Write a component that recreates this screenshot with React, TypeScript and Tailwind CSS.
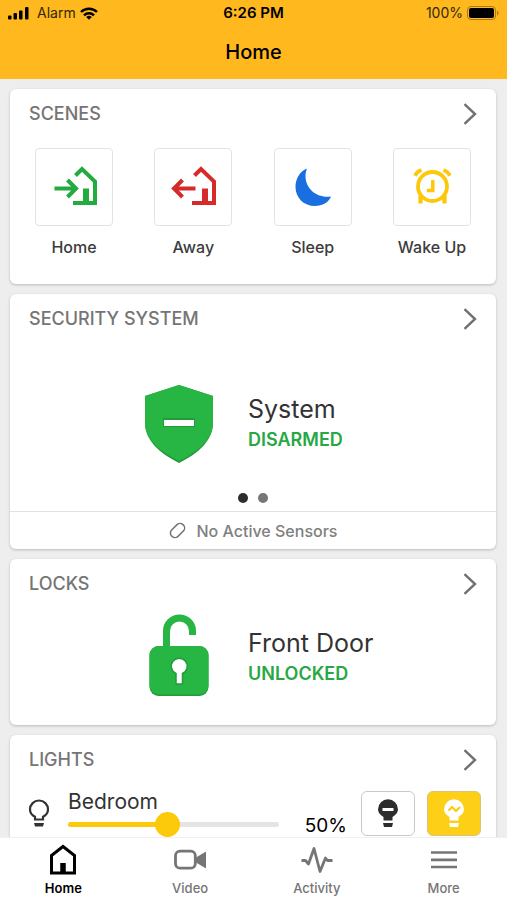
import React, { useState } from 'react';

type Tab = 'Home' | 'Video' | 'Activity' | 'More';

interface CardProps {
  title: string;
  children: React.ReactNode;
}

function Card({ title, children }: CardProps) {
  return (
    <section className="shrink-0 bg-white rounded-md shadow-[0_1px_3px_rgba(0,0,0,0.22)]">
      <div className="flex items-center justify-between h-[50px] px-[19px]">
        <h2 className="text-lg leading-6 font-medium text-[#757575]">{title}</h2>
        <button type="button" aria-label={`Open ${title.toLowerCase()}`}>
          <svg className="w-[14px] h-[22px]" viewBox="0 0 14 22" fill="none" stroke="#707070" strokeWidth="2.4">
            <path d="M1.5 1.2 L12 11 L1.5 20.8" />
          </svg>
        </button>
      </div>
      {children}
    </section>
  );
}

function HomeArriveIcon() {
  return (
    <svg className="w-[46px] h-[42px]" viewBox="0 0 46 42" fill="none" stroke="#22ab3f" strokeWidth="4">
      <path d="M3.5 22.5H25M16.500 14l8.500 8.500-8.500 8.500" />
      <path d="M24.500 9.500 31 3 44 15.500V37H22" />
      <path d="M35 22.500V37" strokeWidth="6" />
    </svg>
  );
}

function HomeLeaveIcon() {
  return (
    <svg className="w-[46px] h-[42px]" viewBox="0 0 46 42" fill="none" stroke="#d62b2b" strokeWidth="4">
      <path d="M25.500 22.500H4.500M12.500 14 4 22.500l8.500 8.500" />
      <path d="M24.500 9.500 31 3 44 15.500V37H22" />
      <path d="M35 22.500V37" strokeWidth="6" />
    </svg>
  );
}

function MoonIcon() {
  return (
    <svg className="w-[38px] h-[40px]" viewBox="0 0 38 40" fill="#1a6fe0">
      <path d="M13 1.500C5.500 4.500 1.500 12 1.500 20c0 11 8.500 19 19.500 19 7.500 0 13.500-3.500 16-9.500C23 31.500 11.500 22 11.500 9c0-2.700.5-5 1.500-7.500Z" />
    </svg>
  );
}

function AlarmClockIcon() {
  return (
    <svg className="w-[38px] h-[38px]" viewBox="0 0 38 38" fill="none" stroke="#fdc70a" strokeWidth="3.800">
      <circle cx="19.500" cy="18.500" r="14.500" />
      <path d="M19.800 12v10.500h-6" strokeWidth="3.500" />
      <path d="M7.500 27v8.500M31.500 27v8.500" strokeWidth="4.200" />
      <path d="M2 7.800C3.200 5 5.200 3 8.500 2M37 7.800C35.800 5 33.800 3 30.500 2" />
    </svg>
  );
}

const scenes = [
  { name: 'Home', icon: <HomeArriveIcon /> },
  { name: 'Away', icon: <HomeLeaveIcon /> },
  { name: 'Sleep', icon: <MoonIcon /> },
  { name: 'Wake Up', icon: <AlarmClockIcon /> },
];

function StatusBar() {
  return (
    <div className="grid grid-cols-3 items-center h-[26px] px-2 text-[14px] leading-5">
      <div className="flex items-center gap-2">
        <svg className="w-[21px] h-[13px]" viewBox="0 0 21 13" fill="currentColor">
          <rect x="0" y="8.500" width="3.500" height="4" rx="1" />
          <rect x="5.500" y="6" width="3.500" height="6.500" rx="1" />
          <rect x="11" y="3.500" width="3.500" height="9" rx="1" />
          <rect x="17" y="0" width="3.500" height="12.500" rx="1" />
        </svg>
        <span className="text-[#33270a]">Alarm</span>
        <svg className="w-[18px] h-[13px] -ml-1" viewBox="0 0 18 13" fill="none" stroke="currentColor" strokeWidth="2.400">
          <path d="M1 5a11.500 11.500 0 0 1 16 0" />
          <path d="M4 8.300a7.200 7.200 0 0 1 10 0" />
          <path d="M9 12.800 6.200 10a4 4 0 0 1 5.600 0Z" fill="currentColor" stroke="none" />
        </svg>
      </div>
      <span className="text-center text-[15px] font-semibold">6:26 PM</span>
      <div className="flex items-center justify-end gap-1">
        <span className="text-[#33270a]">100%</span>
        <svg className="w-[32px] h-[14px]" viewBox="0 0 32 14">
          <rect x="0.500" y="0.500" width="28" height="13" rx="3.500" fill="none" stroke="#a87a18" />
          <rect x="2" y="2" width="25" height="10" rx="2" fill="#000" />
          <path d="M30 4.500c2 .8 2 4.200 0 5Z" fill="#a87a18" />
        </svg>
      </div>
    </div>
  );
}

function ShieldIcon() {
  return (
    <svg className="w-[70px] h-[80px]" viewBox="0 0 70 80">
      <path d="M35 1 69 12v27c0 17-14 30-34 40C15 69 1 56 1 39V12Z" fill="#219a39" />
      <path d="M35 1 69 12v26c0 17-14 29-34 39C15 67 1 55 1 38V12Z" fill="#27b544" />
      <rect x="19" y="34" width="32" height="9" fill="#1f9d3a" />
      <rect x="20" y="36" width="30" height="6" fill="#fff" />
    </svg>
  );
}

function UnlockedIcon() {
  return (
    <svg className="w-[60px] h-[84px] mb-[6px]" viewBox="0 0 60 84">
      <path d="M17.500 36V18a13 13 0 0 1 26 0v4" fill="none" stroke="#27b544" strokeWidth="7" />
      <rect x="0.500" y="33" width="59" height="50" rx="9" fill="#219a39" />
      <rect x="0.500" y="33" width="59" height="48.500" rx="9" fill="#27b544" />
      <g fill="#fff" stroke="#1f9d3a" strokeWidth="1.500">
        <path d="M27 60.500a8 8 0 1 1 6.500 0V71H27Z" />
      </g>
    </svg>
  );
}

interface DeviceStatusProps {
  icon: React.ReactNode;
  name: string;
  state: string;
}

function DeviceStatus({ icon, name, state }: DeviceStatusProps) {
  return (
    <div className="flex items-center gap-[34px] pl-[134px]">
      <div className="flex justify-center w-[70px]">{icon}</div>
      <div>
        <p className="text-[25px] leading-8 text-[#333]">{name}</p>
        <p className="text-lg leading-[30px] font-semibold text-[#27a844]">{state}</p>
      </div>
    </div>
  );
}

function LightsRow() {
  const [level, setLevel] = useState(47);
  // the label snaps to steps of ten
  const label = Math.round(level / 10) * 10;

  return (
    <div className="flex items-start pl-[18px] pr-[15px] pt-[6px] pb-4">
      <svg className="w-[22px] h-[28px] mt-2 shrink-0" viewBox="0 0 22 28" fill="none" stroke="#333" strokeWidth="2.200">
        <path d="M7 20.500v-2.700C3.800 16.200 2 13.800 2 10.500a9 9 0 0 1 18 0c0 3.300-1.800 5.700-5 7.300v2.700Z" />
        <path d="M6 24h10l-1 3.500H7Z" fill="#333" stroke="none" />
      </svg>
      <div className="flex flex-col flex-1 ml-[18px]">
        <label htmlFor="bedroom-level" className="text-[21px] leading-[22px] text-[#333]">Bedroom</label>
        <input
          id="bedroom-level"
          type="range"
          min={0}
          max={100}
          value={level}
          onChange={(e) => setLevel(Number(e.target.value))}
          className="block w-full h-[5px] mt-[9px] rounded-full appearance-none outline-none [&::-webkit-slider-thumb]:appearance-none [&::-webkit-slider-thumb]:w-[25px] [&::-webkit-slider-thumb]:h-[25px] [&::-webkit-slider-thumb]:rounded-full [&::-webkit-slider-thumb]:bg-[#fdc90b]"
          style={{ background: `linear-gradient(to right, #fdc90b ${level}%, #e4e4e4 ${level}%)` }}
        />
      </div>
      <output htmlFor="bedroom-level" className="w-[68px] mt-[23px] text-right text-[19px] leading-6 text-black">{label}%</output>
      <button type="button" aria-label="Turn bedroom off" className="flex justify-center items-center w-[54px] h-[45px] ml-[14px] rounded-md border border-[#c9c9c9] bg-white">
        <svg className="w-[22px] h-[30px]" viewBox="0 0 22 30">
          <path d="M6.500 21.500v-3.500C3 16 1 13.500 1 10.300a10 10 0 0 1 20 0c0 3.200-2 5.700-5.500 7.700v3.500Z" fill="#2d2d2d" />
          <path d="M6 24h10l-1 4H7Z" fill="#2d2d2d" />
          <rect x="5.500" y="9" width="11" height="3" fill="#fff" />
        </svg>
      </button>
      <button type="button" aria-label="Turn bedroom on" className="flex justify-center items-center w-[54px] h-[45px] ml-3 rounded-md border border-[#d9c47a] bg-[#fdcf16]">
        <svg className="w-[22px] h-[30px]" viewBox="0 0 22 30">
          <path d="M6.500 21.500v-3.500C3 16 1 13.500 1 10.300a10 10 0 0 1 20 0c0 3.200-2 5.700-5.500 7.700v3.500Z" fill="#fff" />
          <path d="M6 24h10l-1 4H7Z" fill="#fff" />
          <path d="M5.500 11.500 9 8l4 4 4-4" fill="none" stroke="#fdc90b" strokeWidth="2" />
        </svg>
      </button>
    </div>
  );
}

const tabs: { name: Tab; icon: React.ReactNode }[] = [
  {
    name: 'Home',
    icon: (
      <svg className="w-[32px] h-[32px]" viewBox="0 0 32 32" fill="none" stroke="currentColor" strokeWidth="3">
        <path d="M4.500 29V11.500L16 2.500l11.500 9V29Z" />
        <path d="M16 19v9.500" strokeWidth="5.500" />
      </svg>
    ),
  },
  {
    name: 'Video',
    icon: (
      <svg className="w-[32px] h-[32px]" viewBox="0 0 32 32" fill="none" stroke="currentColor" strokeWidth="2.800">
        <rect x="1.500" y="7.200" width="19.800" height="17" rx="4.500" />
        <path d="M22 13.500 32 7.500v17l-10-6Z" fill="currentColor" stroke="none" />
      </svg>
    ),
  },
  {
    name: 'Activity',
    icon: (
      <svg className="w-[32px] h-[32px]" viewBox="0 0 32 32" fill="none" stroke="currentColor" strokeWidth="2.800" strokeLinejoin="round">
        <path d="M0.500 16.500h4l3 3.500L13 4.500l6 23L24.500 14l2 2.500h5" />
      </svg>
    ),
  },
  {
    name: 'More',
    icon: (
      <svg className="w-[32px] h-[32px]" viewBox="0 0 32 32" fill="none" stroke="currentColor" strokeWidth="2.700">
        <path d="M3 8.500h26M3 15.800h26M3 23h26" />
      </svg>
    ),
  },
];

export default function App() {
  const [active, setActive] = useState<Tab>('Home');

  return (
    <div className="flex flex-col h-screen bg-[#eeeeef] font-['Inter',sans-serif]">
      <header className="shrink-0 bg-[#ffb81d] text-black">
        <StatusBar />
        <h1 className="h-[53px] text-center text-xl leading-[53px] font-medium">Home</h1>
      </header>

      <main className="flex flex-col flex-1 min-h-0 gap-[10px] pt-[10px] pl-[10px] pr-[11px] overflow-hidden">
        <Card title="SCENES">
          <div className="flex justify-between px-[25px] pt-[9px] pb-[26px]">
            {scenes.map((scene) => (
              <button key={scene.name} type="button" className="flex flex-col items-center w-[78px]">
                <span className="flex items-center justify-center w-[78px] h-[78px] rounded border border-[#e3e3e3]">
                  {scene.icon}
                </span>
                <span className="mt-[10px] text-base leading-[22px] font-medium text-[#3c3c3c]">{scene.name}</span>
              </button>
            ))}
          </div>
        </Card>

        <Card title="SECURITY SYSTEM">
          <div className="pt-10">
            <DeviceStatus icon={<ShieldIcon />} name="System" state="DISARMED" />
          </div>
          <div className="flex justify-center gap-[10px] pt-[29px] pb-[8px]">
            <span className="w-[10px] h-[10px] rounded-full bg-[#2d2d2d]"></span>
            <span className="w-[10px] h-[10px] rounded-full bg-[#777]"></span>
          </div>
          <div className="flex items-center justify-center gap-[11px] h-[38px] border-t border-[#e2e2e2]">
            <svg className="w-[17px] h-[17px]" viewBox="0 0 17 17" fill="none" stroke="#757575" strokeWidth="1.500">
              <rect x="0.500" y="4" width="16" height="9" rx="4.200" transform="rotate(-45 8.500 8.500)" />
            </svg>
            <span className="text-base leading-5 font-medium text-[#808080]">No Active Sensors</span>
          </div>
        </Card>

        <Card title="LOCKS">
          <div className="pt-1 pb-[22px]">
            <DeviceStatus icon={<UnlockedIcon />} name="Front Door" state="UNLOCKED" />
          </div>
        </Card>

        <Card title="LIGHTS">
          <LightsRow />
        </Card>
      </main>

      <nav className="grid grid-cols-4 shrink-0 h-[63px] bg-white border-t border-[#f0f0f0]">
        {tabs.map((tab) => (
          <button
            key={tab.name}
            type="button"
            onClick={() => setActive(tab.name)}
            className={`flex flex-col items-center pt-[6px] text-[13px] leading-5 ${
              active === tab.name ? 'font-semibold text-black' : 'font-medium text-[#757575]'
            }`}
          >
            {tab.icon}
            <span className="mt-[2px]">{tab.name}</span>
          </button>
        ))}
      </nav>
    </div>
  );
}
